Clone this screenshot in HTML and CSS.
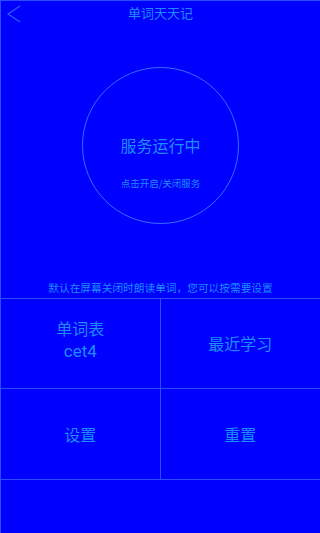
FILE: index.html
```html
<!DOCTYPE html>
<html lang="zh">
<head>
<meta charset="utf-8">
<link rel="stylesheet" href="styles.css">
</head>
<body>
<div class="app">
  <header class="topbar">
    <svg class="back" width="15" height="18" viewBox="0 0 15 18"><path d="M14 1 L2 9 L14 17" fill="none" stroke="#2a62ff" stroke-width="1.1"/></svg>
    <div class="title">单词天天记</div>
  </header>
  <section class="hero">
    <div class="circle">
      <div class="status">服务运行中</div>
      <div class="hint">点击开启/关闭服务</div>
    </div>
  </section>
  <p class="note">默认在屏幕关闭时朗读单词，您可以按需要设置</p>
  <div class="grid">
    <div class="cell"><span>单词表</span><span class="latin">cet4</span></div>
    <div class="cell"><span>最近学习</span></div>
    <div class="cell"><span>设置</span></div>
    <div class="cell"><span>重置</span></div>
  </div>
</div>
</body>
</html>
```
FILE: styles.css
```css
html, body { margin: 0; padding: 0; }
body {
  background: #0000ff;
  font-family: "Noto Sans CJK SC", "Noto Sans", sans-serif;
  color: #1e8cff;
}
.app {
  width: 320px;
  height: 533px;
  box-sizing: border-box;
  border-left: 1px solid #2a4cff;
  border-top: 1px solid #2a4cff;
  display: flex;
  flex-direction: column;
}
.topbar {
  position: relative;
  height: 33px;
  box-sizing: border-box;
  padding-top: 2px;
  display: flex;
  align-items: flex-start;
  justify-content: center;
}
.back { position: absolute; left: 5px; top: 4px; }
.title { font-size: 13px; line-height: 20px; }
.hero {
  display: flex;
  justify-content: center;
  padding-top: 33px;
}
.circle {
  width: 157px;
  height: 157px;
  border: 1px solid #3a6cff;
  border-radius: 50%;
  box-sizing: border-box;
  display: flex;
  flex-direction: column;
  align-items: center;
  padding-top: 66px;
}
.status { font-size: 16px; line-height: 23px; }
.hint { font-size: 9.5px; line-height: 14px; margin-top: 19px; }
.note {
  margin: 56px 0 0;
  text-align: center;
  font-size: 10.7px;
  line-height: 16px;
  height: 18px;
}
.grid {
  display: grid;
  grid-template-columns: 1fr 1fr;
  grid-template-rows: 90px 90px;
  border-top: 1px solid #2a4cff;
  border-bottom: 1px solid #2a4cff;
}
.cell {
  display: flex;
  flex-direction: column;
  align-items: center;
  justify-content: center;
  font-size: 16px;
  line-height: 23px;
}
.cell:first-child { padding-bottom: 8px; box-sizing: border-box; }
.latin { font-family: Roboto, "Noto Sans", sans-serif; font-size: 17px; }
.cell:nth-child(odd) { border-right: 1px solid #2a4cff; }
.cell:nth-child(-n+2) { border-bottom: 1px solid #2a4cff; }
```
